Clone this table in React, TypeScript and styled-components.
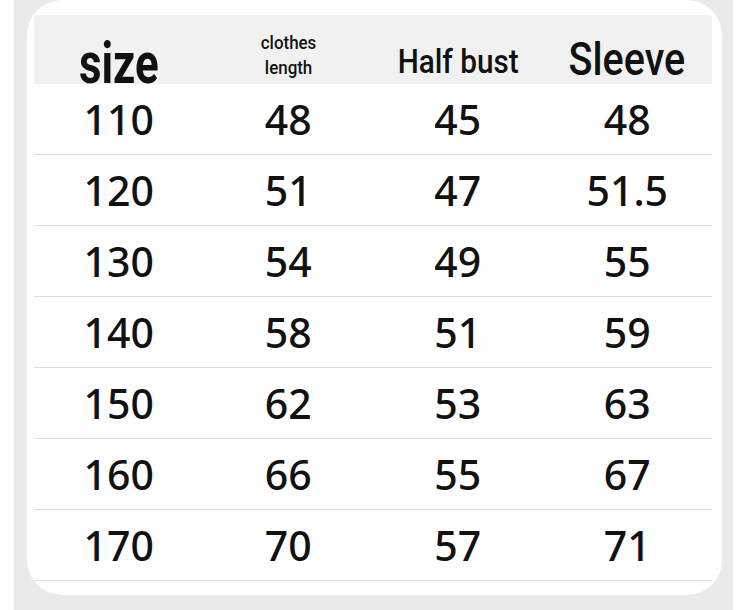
import styled, { createGlobalStyle } from 'styled-components';

const GlobalStyle = createGlobalStyle`
  html, body {
    margin: 0;
    padding: 0;
    background: #ffffff;
  }
`;

const Backdrop = styled.div`
  width: 719px;
  height: 610px;
  margin-left: 14px;
  box-sizing: border-box;
  padding: 0 11px 15px 13px;
  background: #eaeaea;
`;

const Card = styled.div`
  height: 100%;
  box-sizing: border-box;
  padding: 15px 10px 0 7px;
  background: #ffffff;
  border-radius: 35px;
`;

const HeaderRow = styled.div`
  display: grid;
  grid-template-columns: repeat(4, 1fr);
  align-items: end;
  height: 69px;
  background: #f1f1f1;
  border-radius: 4px 4px 0 0;
`;

const HeadCell = styled.div<{ $drop: number }>`
  display: flex;
  justify-content: center;
  margin-bottom: ${p => p.$drop}px;
  font-family: Roboto, 'Liberation Sans', sans-serif;
  color: #111;
`;

const HeadText = styled.span<{ $size: number; $weight: number; $squeeze: number; $lh: number }>`
  display: inline-block;
  font-size: ${p => p.$size}px;
  font-weight: ${p => p.$weight};
  line-height: ${p => p.$lh}px;
  text-align: center;
  white-space: nowrap;
  transform: scaleX(${p => p.$squeeze});
`;

const Row = styled.div`
  display: grid;
  grid-template-columns: repeat(4, 1fr);
  align-items: center;
  height: 70px;
  border-bottom: 1px solid #dedede;
`;

const Cell = styled.div`
  text-align: center;
  font-family: 'Noto Sans', 'Open Sans', sans-serif;
  font-size: 41px;
  font-weight: 500;
  color: #111;
  line-height: 1;
`;

const rows = [
  ['110', '48', '45', '48'],
  ['120', '51', '47', '51.5'],
  ['130', '54', '49', '55'],
  ['140', '58', '51', '59'],
  ['150', '62', '53', '63'],
  ['160', '66', '55', '67'],
  ['170', '70', '57', '71'],
];

export default function App() {
  return (
    <>
      <GlobalStyle />
      <Backdrop>
        <Card>
          <HeaderRow>
            <HeadCell $drop={0}>
              <HeadText $size={57} $weight={700} $squeeze={0.77} $lh={41}>size</HeadText>
            </HeadCell>
            <HeadCell $drop={4}>
              <HeadText $size={18} $weight={500} $squeeze={0.94} $lh={25}>
                clothes
                <br />
                length
              </HeadText>
            </HeadCell>
            <HeadCell $drop={6}>
              <HeadText $size={33} $weight={500} $squeeze={0.9} $lh={33}>Half bust</HeadText>
            </HeadCell>
            <HeadCell $drop={2}>
              <HeadText $size={46} $weight={500} $squeeze={0.86} $lh={46}>Sleeve</HeadText>
            </HeadCell>
          </HeaderRow>
          {rows.map(r => (
            <Row key={r[0]}>
              {r.map((v, i) => (
                <Cell key={i}>{v}</Cell>
              ))}
            </Row>
          ))}
        </Card>
      </Backdrop>
    </>
  );
}
